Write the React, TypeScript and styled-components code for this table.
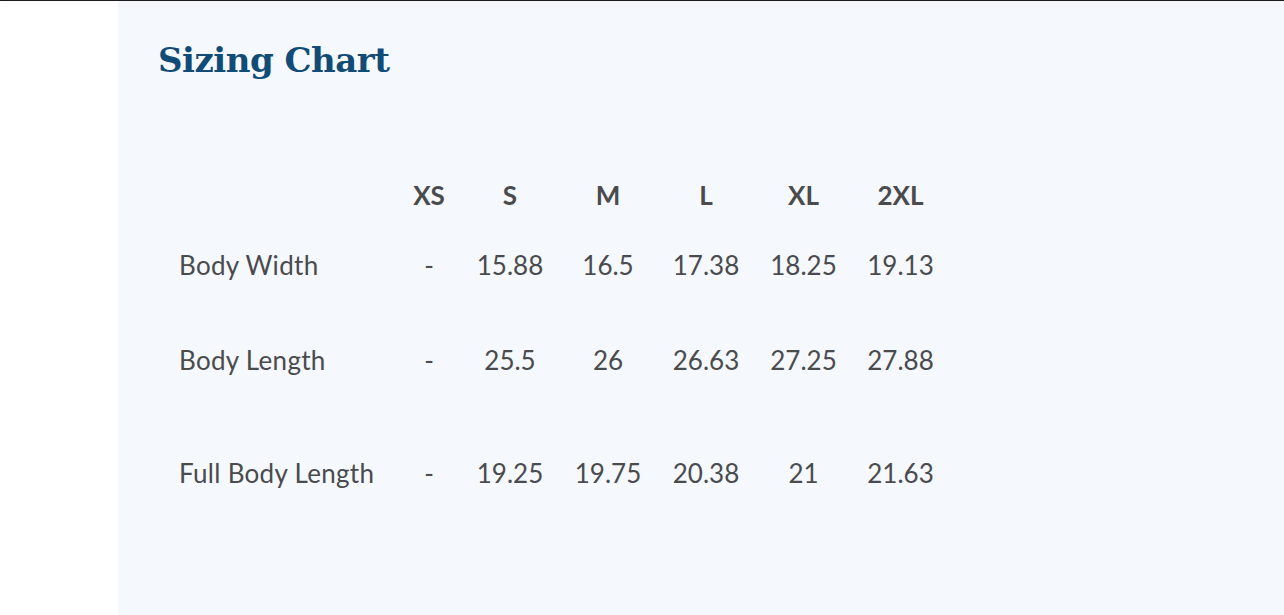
import * as React from 'react';
import styled, { createGlobalStyle } from 'styled-components';

const GlobalStyle = createGlobalStyle`
  html, body {
    margin: 0;
    padding: 0;
    background: #ffffff;
  }
  body {
    font-family: 'Lato', 'Liberation Sans', sans-serif;
  }
`;

interface ISizeRow {
  label: string;
  values: string[];
}

const sizes = ['XS', 'S', 'M', 'L', 'XL', '2XL'];

const rows: ISizeRow[] = [
  { label: 'Body Width', values: ['-', '15.88', '16.5', '17.38', '18.25', '19.13'] },
  { label: 'Body Length', values: ['-', '25.5', '26', '26.63', '27.25', '27.88'] },
  { label: 'Full Body Length', values: ['-', '19.25', '19.75', '20.38', '21', '21.63'] },
];

const Page = styled.div`
  position: relative;
  display: flex;
  width: 1284px;
  height: 615px;
  overflow: hidden;
`;

const TopEdge = styled.div`
  position: absolute;
  top: 0;
  left: 0;
  right: 0;
  height: 1px;
  background: #1c1c1c;
  box-shadow: 0 1px 8px rgba(0, 0, 0, 0.12);
  z-index: 2;
`;

const Gutter = styled.div`
  width: 118px;
  flex: none;
  background: #ffffff;
`;

const Panel = styled.section`
  flex: 1;
  background: #f5f8fd;
  padding: 38px 0 0 40px;
`;

const Title = styled.h2`
  margin: 0;
  font-family: 'DejaVu Serif', 'Liberation Serif', serif;
  font-weight: 700;
  font-size: 34px;
  line-height: 44px;
  letter-spacing: -0.5px;
  color: #114c77;
`;

const Table = styled.div`
  margin: 93px 0 0 21px;
  display: grid;
  grid-template-columns: 218px 64px 98px 98px 98px 97px 97px;
  grid-template-rows: 40px 100px 90px 136px;
`;

const Row = styled.div`
  display: contents;
`;

const Cell = styled.div<{ $head?: boolean; $align?: 'left' | 'center' }>`
  display: flex;
  align-items: center;
  justify-content: ${(p) => (p.$align === 'left' ? 'flex-start' : 'center')};
  font-family: 'Lato', 'Liberation Sans', sans-serif;
  font-size: 26px;
  letter-spacing: ${(p) => (p.$align === 'left' ? '0.3px' : '0')};
  font-weight: ${(p) => (p.$head ? 700 : 400)};
  color: #4a4b4d;
  white-space: nowrap;
`;

const App: React.FC = () => (
  <Page>
    <GlobalStyle />
    <TopEdge />
    <Gutter />
    <Panel>
      <Title>Sizing Chart</Title>
      <Table>
        <Row>
          <Cell $align="left" />
          {sizes.map((s) => (
            <Cell key={s} $head>
              {s}
            </Cell>
          ))}
        </Row>
        {rows.map((r) => (
          <Row key={r.label}>
            <Cell $align="left">{r.label}</Cell>
            {r.values.map((v, j) => (
              <Cell key={j}>{v}</Cell>
            ))}
          </Row>
        ))}
      </Table>
    </Panel>
  </Page>
);

export default App;
